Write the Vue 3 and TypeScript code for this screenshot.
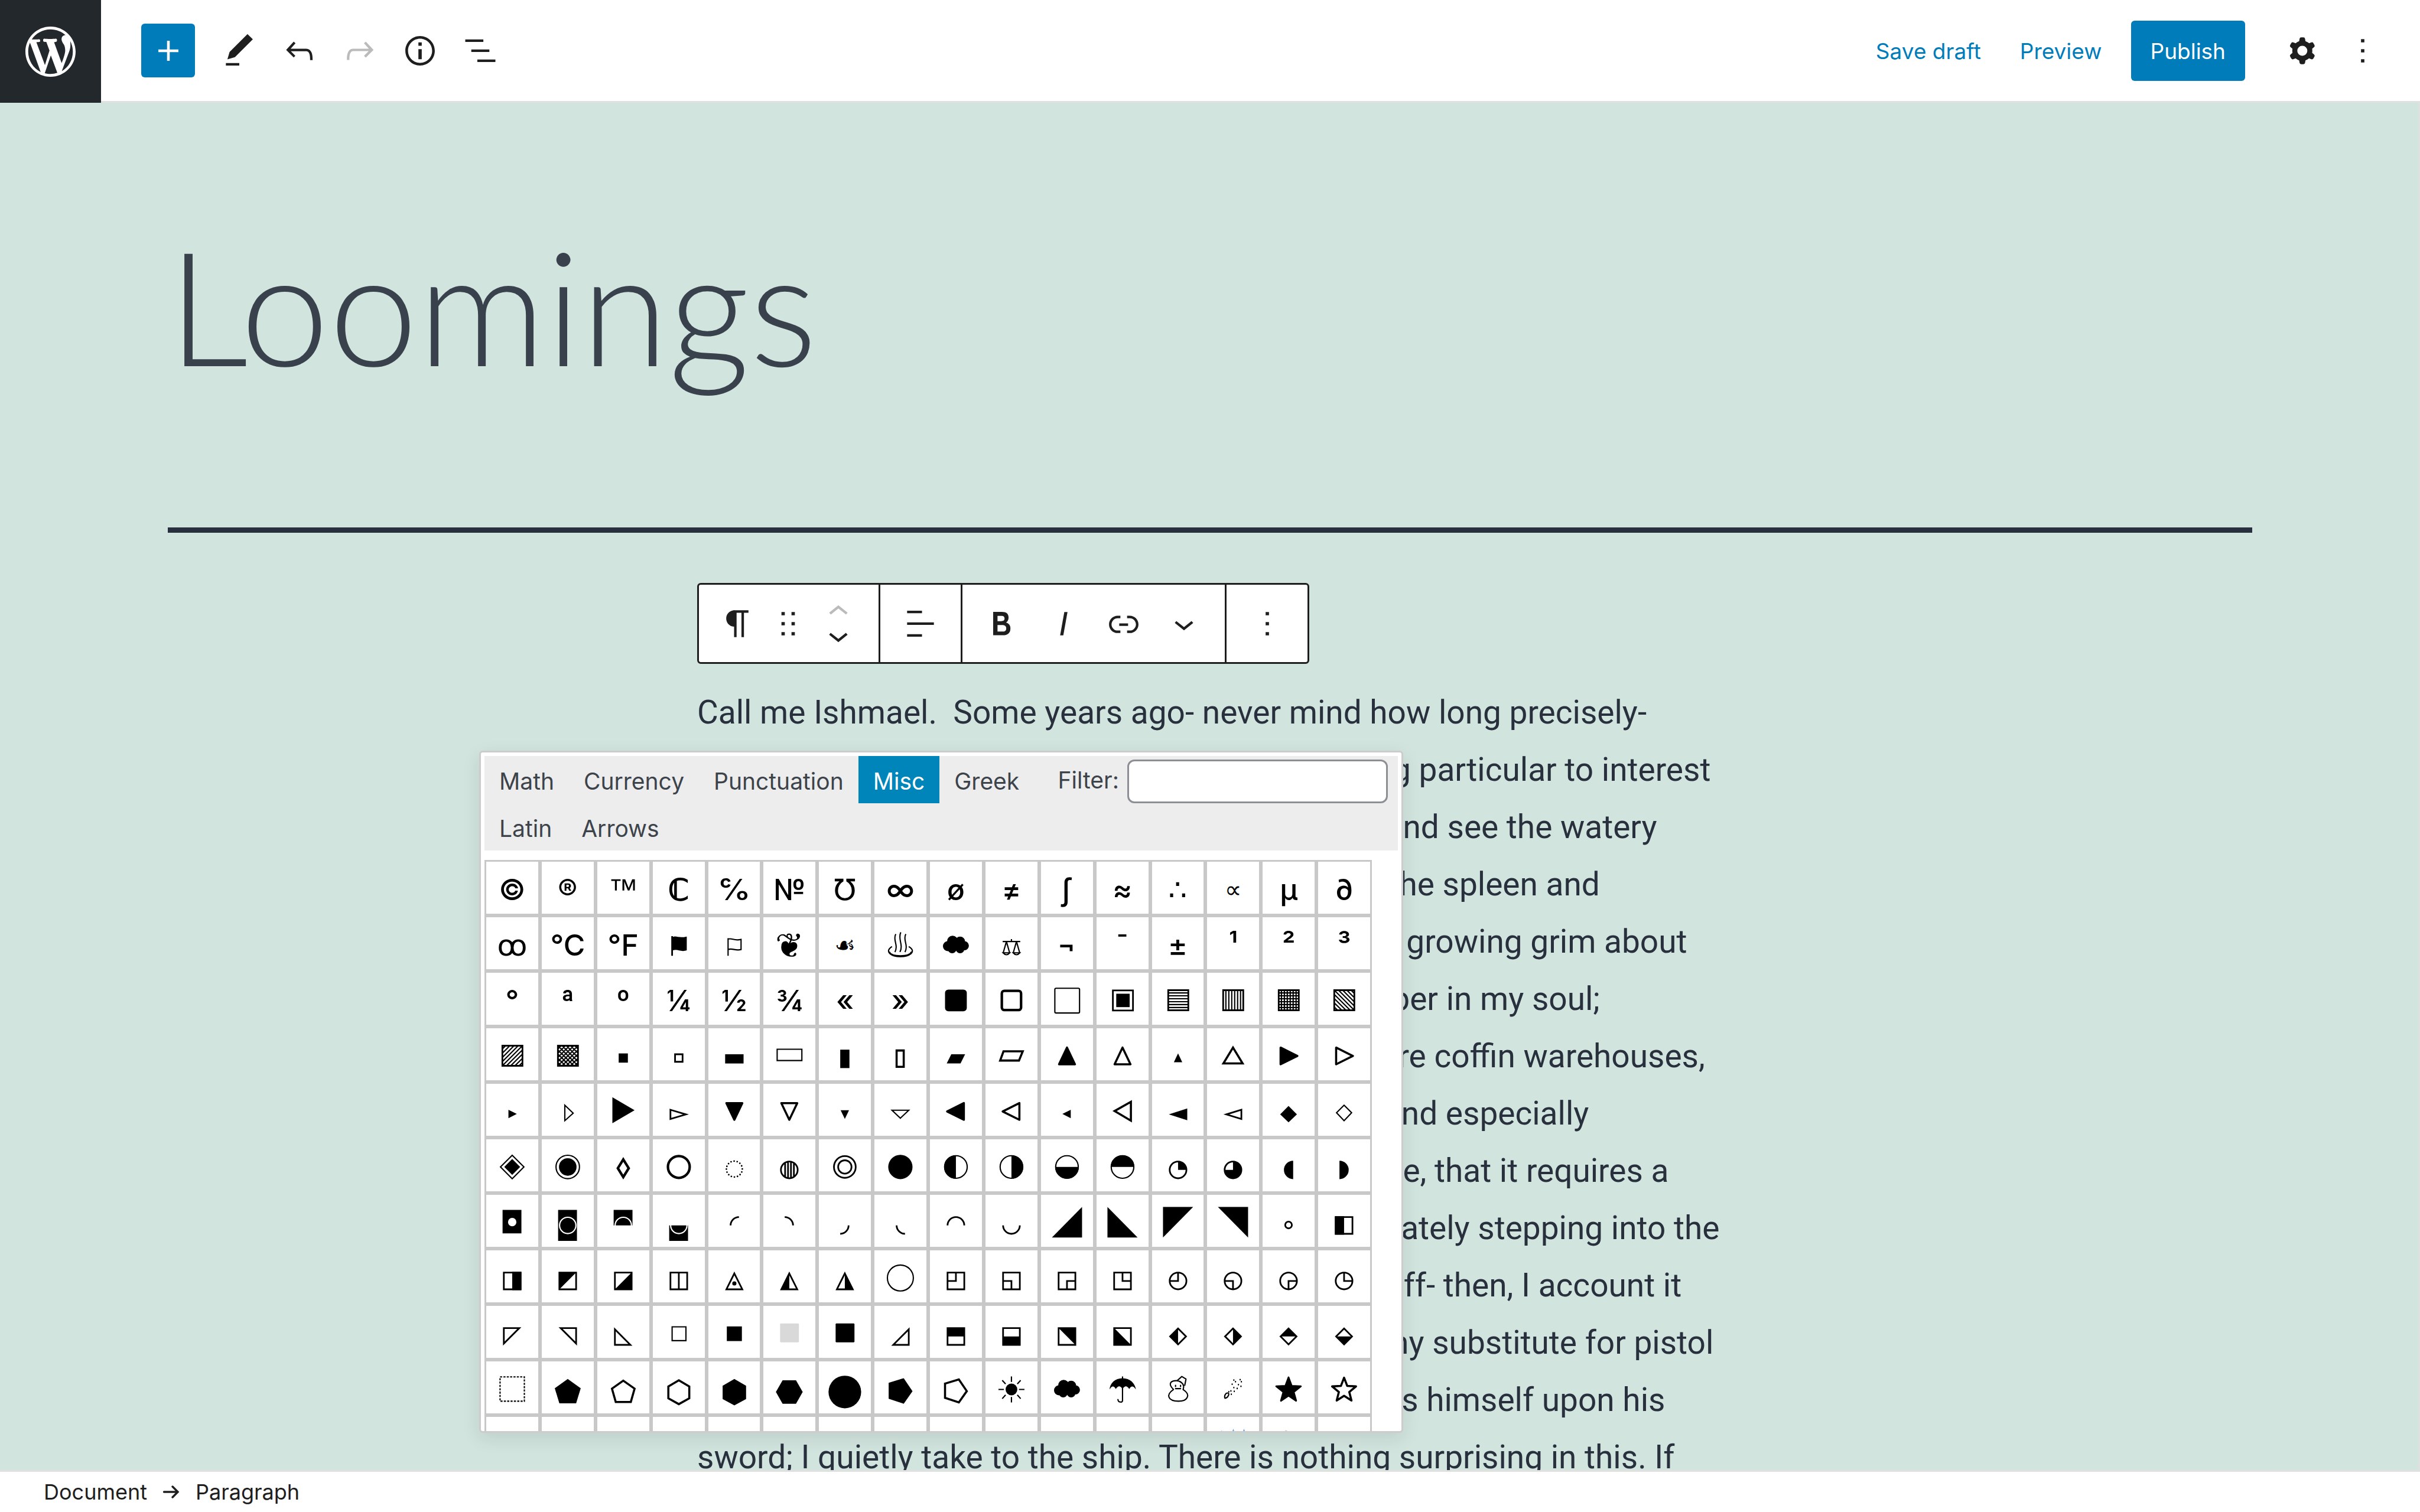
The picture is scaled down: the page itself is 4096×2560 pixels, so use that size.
<script setup lang="ts">
import { ref } from 'vue'

interface Cell {
  ch: string
  /** filled outline */
  f?: string
  /** stroked outline */
  s?: string
  /** stroke width */
  w?: number
  dash?: string
  round?: boolean
  tint?: string
  /** glyph variant for text cells */
  kind?: string
}

const circle = (cx: number, cy: number, r: number): string =>
  `M${cx - r} ${cy}a${r} ${r} 0 1 0 ${2 * r} 0a${r} ${r} 0 1 0 ${-2 * r} 0z`

const rect = (x: number, y: number, w: number, h: number): string => `M${x} ${y}h${w}v${h}h${-w}z`

const rounded = (x: number, y: number, s: number, r: number): string =>
  `M${x + r} ${y}h${s - 2 * r}a${r} ${r} 0 0 1 ${r} ${r}v${s - 2 * r}a${r} ${r} 0 0 1 ${-r} ${r}h${2 * r - s}a${r} ${r} 0 0 1 ${-r} ${-r}v${2 * r - s}a${r} ${r} 0 0 1 ${r} ${-r}z`

const star = (cx: number, cy: number, outer: number, inner: number): string => {
  const pts: string[] = []
  for (let i = 0; i < 10; i++) {
    const r = i % 2 ? inner : outer
    const a = (Math.PI / 5) * i
    pts.push(`${(cx + r * Math.sin(a)).toFixed(1)} ${(cy - r * Math.cos(a)).toFixed(1)}`)
  }
  return `M${pts.join('L')}z`
}

/** Parallel lines inside the hatched squares. */
const X0 = 42
const Y0 = 45
const SIDE = 49
const rows = [1, 2, 3, 4, 5, 6].map((i) => `M${X0} ${Y0 + i * 7}h${SIDE}`).join('')
const cols = [1, 2, 3, 4, 5, 6].map((i) => `M${X0 + i * 7} ${Y0}v${SIDE}`).join('')
const falling = [-40, -30, -20, -10, 0, 10, 20, 30, 40]
  .map((d) => (d < 0 ? `M${X0} ${Y0 - d}l${SIDE + d} ${SIDE + d}` : `M${X0 + d} ${Y0}l${SIDE - d} ${SIDE - d}`))
  .join('')
const rising = [-40, -30, -20, -10, 0, 10, 20, 30, 40]
  .map((d) =>
    d < 0
      ? `M${X0} ${Y0 + SIDE + d}l${SIDE + d} ${-SIDE - d}`
      : `M${X0 + d} ${Y0 + SIDE}l${SIDE - d} ${-SIDE + d}`,
  )
  .join('')
const hatchBox = rect(X0, Y0, SIDE, SIDE) + rect(X0 + 1, Y0 + 1, SIDE - 2, SIDE - 2)

const box = rect(46, 57, 40, 40)
const disc = circle(66, 77, 20)
const big = circle(66, 70, 27)
const small = 'M66 59L85 97H47z'
const lozenge = 'M66 58L85 77L66 96L47 77z'
const cloud =
  circle(58, 61, 13) + circle(76, 62, 12) + circle(47, 73, 12) + circle(86, 72, 11) + circle(57, 80, 10) + circle(76, 80, 10) + circle(66, 71, 13)

const letters = (text: string): Cell[] => text.split(' ').map((ch) => ({ ch }))

const cells: Cell[] = [
  ...letters('© ®'),
  { ch: '™', kind: 'arial' },
  { ch: 'ℂ', kind: 'heavy' },
  ...letters('℅ № ℧ ∞ ø ≠ ∫ ≈ ∴'),
  { ch: '∝', kind: 'little' },
  ...letters('µ ∂'),

  ...letters('ꝏ ℃ ℉'),
  { ch: '⚑', f: 'M48 49h4v2c8-4 14 4 33-1v33c-14 5-22-4-33 0v13h-4z' },
  { ch: '⚐', s: 'M51 96V54M51 56c10-3 14 5 31 1v24c-13 4-20-4-31 0', w: 3 },
  { ch: '❦', kind: 'large' },
  { ch: '☙', kind: 'little' },
  {
    ch: '♨',
    s: 'M55 44c-8 14 7 26-2 43M67 40c-8 16 7 29-2 47M79 44c-8 14 7 26-2 43M46 74c-20 13 0 24 20 24s41-11 20-24M39 86c4 8 14 10 27 10s23-2 27-10',
    w: 3,
  },
  { ch: '☁', f: cloud, kind: 'solid' },
  { ch: '⚖', s: 'M45 62h42M66 56v6M54 62L46 90M54 62l8 28M78 62l-8 28M78 62l8 28M46 89q8 9 16 0zM70 89q8 9 16 0z', w: 3 },
  ...letters('¬ ¯ ± ¹ ² ³'),

  ...letters('° ª º ¼ ½ ¾ « »'),
  { ch: '■', f: rounded(40, 44, 52, 8) },
  { ch: '□', s: rounded(43, 47, 46, 6), w: 6 },
  { ch: '▢', s: rounded(37, 41, 59, 3), w: 3 },
  { ch: '▣', s: rect(43, 46, 48, 48), w: 4, f: rect(51, 54, 32, 32) },
  { ch: '▤', s: hatchBox + rows, w: 3 },
  { ch: '▥', s: hatchBox + cols, w: 3 },
  { ch: '▦', s: hatchBox + rows + cols, w: 3 },
  { ch: '▧', s: hatchBox + falling, w: 3 },

  { ch: '▨', s: hatchBox + rising, w: 3 },
  { ch: '▩', s: hatchBox + rising + falling, w: 3 },
  { ch: '▪', f: rect(55, 64, 22, 22) },
  { ch: '▫', s: rect(57, 66, 18, 18), w: 4 },
  { ch: '▬', f: rect(44, 66, 44, 22) },
  { ch: '▭', s: rect(37, 54, 59, 27), w: 3 },
  { ch: '▮', f: rect(55, 55, 22, 44) },
  { ch: '▯', s: rect(57, 57, 17, 39), w: 5 },
  { ch: '▰', f: 'M55 66H88L77 88H44z' },
  { ch: '▱', s: 'M47 59H93L84 81H39z', w: 5 },
  { ch: '▲', s: 'M66 50L85 90H47z', f: 'M66 50L85 90H47z', w: 5, round: true },
  { ch: '△', s: 'M66 50L85 90H47z', w: 5, round: true },
  { ch: '▴', f: 'M66 64L76 85H56z' },
  { ch: '▵', s: 'M66 50L89 88H43z', w: 5 },
  { ch: '▶', s: 'M47 50L87 70L47 90z', f: 'M47 50L87 70L47 90z', w: 5, round: true },
  { ch: '▷', s: 'M47 50L87 70L47 90z', w: 5, round: true },

  { ch: '▸', f: 'M57 66L77 76L57 86z' },
  { ch: '▹', s: 'M59 55L79 74L59 92z', w: 3 },
  { ch: '►', f: 'M40 36L93 67L40 98z' },
  { ch: '▻', s: 'M46 66L83 77L46 88z', w: 4 },
  { ch: '▼', s: 'M47 50H85L66 90z', f: 'M47 50H85L66 90z', w: 5, round: true },
  { ch: '▽', s: 'M47 50H85L66 90z', w: 5, round: true },
  { ch: '▾', f: 'M56 67H76L66 88z' },
  { ch: '▿', s: 'M46 67H86L66 86z', w: 3 },
  { ch: '◀', s: 'M85 50V90L45 70z', f: 'M85 50V90L45 70z', w: 5, round: true },
  { ch: '◁', s: 'M85 50V90L45 70z', w: 5, round: true },
  { ch: '◂', f: 'M75 66V86L55 76z' },
  { ch: '◃', s: 'M86 47V92L47 69z', w: 5 },
  { ch: '◄', f: 'M88 63V91L44 77z' },
  { ch: '◅', s: 'M86 66V88L50 77z', w: 4 },
  { ch: '◆', f: 'M66 57L86 77L66 96L46 77z' },
  { ch: '◇', s: 'M66 55L84 73L66 92L48 73z', w: 3 },

  { ch: '◈', s: 'M66 42L94 70L66 98L38 70z', f: 'M66 51L85 70L66 89L47 70z', w: 3 },
  { ch: '◉', s: circle(66, 70, 28), f: circle(66, 70, 21), w: 3 },
  { ch: '◊', s: 'M66 52L79 73L66 94L53 73z', w: 6 },
  { ch: '○', s: circle(66, 70, 26), w: 6 },
  { ch: '◌', s: circle(66, 75, 19), w: 4, dash: '0 7.46', round: true },
  { ch: '◍', s: circle(66, 77, 20) + 'M56 59v36M63 57v40M70 57v40M77 59v36', w: 4 },
  { ch: '◎', s: circle(66, 70, 26) + circle(66, 70, 16), w: 4 },
  { ch: '●', f: circle(66, 70, 29) },
  { ch: '◐', s: big, f: 'M66 42a28 28 0 0 0 0 56z', w: 3 },
  { ch: '◑', s: big, f: 'M66 42a28 28 0 0 1 0 56z', w: 3 },
  { ch: '◒', s: big, f: 'M38 70a28 28 0 0 0 56 0z', w: 3 },
  { ch: '◓', s: big, f: 'M38 70a28 28 0 0 1 56 0z', w: 3 },
  { ch: '◔', s: disc, f: 'M66 77V57a20 20 0 0 1 20 20z', w: 4 },
  { ch: '◕', s: disc, f: 'M66 77V57a20 20 0 1 1 -20 20z', w: 4 },
  { ch: '◖', f: 'M77 55a22 22 0 0 0 0 44z' },
  { ch: '◗', f: 'M55 55a22 22 0 0 1 0 44z' },

  { ch: '◘', f: rect(43, 40, 45, 56) + circle(66, 69, 10) },
  { ch: '◙', f: rect(43, 40, 45, 74) + circle(66, 77, 21) + circle(66, 77, 18) },
  { ch: '◚', f: 'M43 77V40H88V77H87A21 21 0 0 0 45 77zM48 77a18 18 0 0 1 36 0z' },
  { ch: '◛', f: 'M43 77V114H88V77H87A21 21 0 0 1 45 77zM48 77a18 18 0 0 0 36 0z' },
  { ch: '◜', s: 'M57 77A20 20 0 0 1 77 57', w: 4 },
  { ch: '◝', s: 'M55 57A20 20 0 0 1 75 77', w: 4 },
  { ch: '◞', s: 'M75 77A20 20 0 0 1 55 97', w: 4 },
  { ch: '◟', s: 'M57 77A20 20 0 0 0 77 97', w: 4 },
  { ch: '◠', s: 'M46 77A20 20 0 0 1 86 77', w: 4 },
  { ch: '◡', s: 'M46 77A20 20 0 0 0 86 77', w: 4 },
  { ch: '◢', f: 'M30 106H102V33z' },
  { ch: '◣', f: 'M30 33V106H102z' },
  { ch: '◤', f: 'M30 33H102L30 106z' },
  { ch: '◥', f: 'M30 33H102V106z' },
  { ch: '◦', s: circle(66, 76, 8), w: 4 },
  { ch: '◧', s: box, f: rect(44, 55, 22, 44), w: 4 },

  { ch: '◨', s: box, f: rect(66, 55, 22, 44), w: 4 },
  { ch: '◩', s: box, f: 'M46 57H86L46 97z', w: 4 },
  { ch: '◪', s: box, f: 'M86 57V97H46z', w: 4 },
  { ch: '◫', s: box + 'M66 57v40', w: 4 },
  { ch: '◬', s: small, f: circle(66, 83, 5), w: 4 },
  { ch: '◭', s: small, f: 'M66 59V97H47z', w: 4 },
  { ch: '◮', s: small, f: 'M66 59V97H85z', w: 4 },
  { ch: '◯', s: circle(66, 70, 31), w: 3 },
  { ch: '◰', s: box + 'M66 57v20h-20', w: 4 },
  { ch: '◱', s: box + 'M46 77h20v20', w: 4 },
  { ch: '◲', s: box + 'M66 97v-20h20', w: 4 },
  { ch: '◳', s: box + 'M66 57v20h20', w: 4 },
  { ch: '◴', s: disc + 'M66 57v20h-20', w: 4 },
  { ch: '◵', s: disc + 'M46 77h20v20', w: 4 },
  { ch: '◶', s: disc + 'M66 97v-20h20', w: 4 },
  { ch: '◷', s: disc + 'M66 57v20h20', w: 4 },

  { ch: '◸', s: 'M46 57H83L46 94z', w: 4 },
  { ch: '◹', s: 'M49 57H86V94z', w: 4 },
  { ch: '◺', s: 'M46 60V97H83z', w: 4 },
  { ch: '◻', s: rect(50, 54, 33, 33), w: 3 },
  { ch: '◼', f: rect(48, 53, 36, 35) },
  { ch: '◽', f: rounded(44, 46, 45, 2), tint: '#d9d9d9' },
  { ch: '◾', f: rounded(44, 46, 45, 2) },
  { ch: '◿', s: 'M86 60V97H49z', w: 4 },
  { ch: '⬒', s: box, f: rect(46, 57, 40, 20), w: 4 },
  { ch: '⬓', s: box, f: rect(46, 77, 40, 20), w: 4 },
  { ch: '⬔', s: box, f: 'M46 57H86V97z', w: 4 },
  { ch: '⬕', s: box, f: 'M46 57V97H86z', w: 4 },
  { ch: '⬖', s: lozenge, f: 'M66 58V96L47 77z', w: 4 },
  { ch: '⬗', s: lozenge, f: 'M66 58V96L85 77z', w: 4 },
  { ch: '⬘', s: lozenge, f: 'M47 77H85L66 58z', w: 4 },
  { ch: '⬙', s: lozenge, f: 'M47 77H85L66 96z', w: 4 },

  { ch: '⬚', s: rect(37, 41, 58, 58), w: 3, dash: '5 3' },
  { ch: '⬟', f: 'M66 46L97 68L86 104H46L35 68z' },
  { ch: '⬠', s: 'M66 50L93 69L84 101H48L39 69z', w: 5 },
  { ch: '⬡', s: 'M66 49L91 64V92L66 106L41 92V64z', w: 5 },
  { ch: '⬢', f: 'M66 46L94 62V94L66 109L38 94V62z' },
  { ch: '⬣', f: 'M50 49H82L98 77L82 105H50L34 77z' },
  { ch: '⬤', f: circle(66, 77, 39) },
  { ch: '⭓', f: 'M38 55L74 44L95 75L74 105L38 93z' },
  { ch: '⭔', s: 'M40 57L73 47L92 75L73 102L40 91z', w: 5 },
  {
    ch: '☀',
    f: circle(66, 71, 14),
    s: 'M66 40v13M66 89v13M35 71h13M84 71h13M44 49l8 9M80 84l8 9M88 49l-8 9M52 84l-8 9',
    w: 3,
  },
  { ch: '☁', f: cloud, kind: 'solid' },
  {
    ch: '☂',
    f: 'M66 44C48 44 36 56 35 71Q43 57 50 70Q58 57 66 70Q74 57 82 70Q89 57 98 71C96 56 84 44 66 44z',
    s: 'M66 40v57q0 5-5 4q-6 0-6-7',
    w: 3,
  },
  {
    ch: '☃',
    s: 'M55 71C40 56 50 50 62 50C68 50 84 56 78 71C98 84 88 99 67 99C42 99 36 84 55 71M64 50L75 40L85 46L82 61M60 61v3M72 61v3M60 69h12',
    w: 3,
    round: true,
  },
  {
    ch: '☄',
    s: 'M47 92q-3-6 3-12q5-2 6 2q-1 8-9 10zM61 74v1M68 66v1M62 82v1M69 75v1M76 68v1M64 58v1M72 52v1M79 59v1M86 52v1M85 63v1M68 48v1M83 47v1M56 76v1',
    w: 3,
    round: true,
  },
  { ch: '★', f: star(66, 73, 31, 13), s: star(66, 73, 31, 13), w: 4, round: true },
  { ch: '☆', s: star(66, 73, 30, 13), w: 5, round: true },

  ...'☎☏☐☑☒☓☔☕☖☗☘☙☚'.split('').map((ch) => ({ ch, f: 'M0 0' })),
  { ch: '⛆', f: 'M36 42L39 36L41 42zM63 42L67 32L70 42zM89 42L92 32L96 42z', tint: '#5aa5e6' },
  { ch: '☃', f: 'M58 36h4l2 6h-6z', tint: '#c9c9c9' },
  { ch: '☇', f: 'M0 0' },
]

const filter = ref('')
const tabRows = [['Math', 'Currency', 'Punctuation', 'Misc', 'Greek'], ['Latin', 'Arrows']]
const active = ref('Misc')

const tools = [
  { name: 'Edit', d: 'M20.1 5.1L16.9 2 6.2 12.7l-1.3 4.4 4.5-1.3L20.1 5.1zM4 20.8h8v-1.5H4v1.5z' },
  {
    name: 'Undo',
    d: 'M18.3 11.7c-.6-.6-1.4-.9-2.3-.9H6.7l2.9-3.3-1.1-1-4.5 5L8.5 16l1-1-2.7-2.7H16c.5 0 .9.2 1.3.5 1 1 1 3.4 1 4.5v.3h1.5v-.2c0-1.5 0-4.3-1.5-5.7z',
  },
  {
    name: 'Redo',
    off: true,
    d: 'M15.6 6.5l-1.1 1 2.9 3.3H8c-.9 0-1.7.3-2.3.9-1.4 1.5-1.4 4.2-1.4 5.6v.2h1.5v-.3c0-1.1 0-3.5 1-4.5.3-.3.7-.5 1.3-.5h9.2L14.5 15l1.1 1.1 4.6-4.6-4.6-5z',
  },
  {
    name: 'Details',
    d: 'M12 3.2c-4.8 0-8.8 3.9-8.8 8.8 0 4.8 3.9 8.8 8.8 8.8 4.8 0 8.8-3.9 8.8-8.8 0-4.8-4-8.8-8.8-8.8zm0 16c-4 0-7.2-3.3-7.2-7.2C4.8 8 8 4.8 12 4.8s7.2 3.3 7.2 7.2c0 4-3.2 7.2-7.2 7.2zM11 17h2v-6h-2v6zm0-8h2V7h-2v2z',
  },
  { name: 'List view', d: 'M13.8 5.2H3v1.5h10.8V5.2zm-3.6 12v1.5H21v-1.5H10.2zm7.2-6H6.6v1.5h10.8v-1.5z' },
]

const dots = 'M13 19h-2v-2h2v2zm0-6h-2v-2h2v2zm0-6h-2V5h2v2z'
const chevronDown = 'M17.5 11.6L12 16l-5.5-4.4.9-1.2L12 14l4.5-3.6 1 1.2z'
const chevronUp = 'M6.5 12.4L12 8l5.5 4.4-.9 1.2L12 10l-4.5 3.6-1-1.2z'

const formats = [
  {
    name: 'Bold',
    view: '1 0 24 24',
    d: 'M14.7 11.3c1-.6 1.5-1.6 1.5-3 0-2.3-1.3-3.4-4-3.4H7v14h5.8c1.4 0 2.5-.3 3.3-1 .8-.7 1.2-1.7 1.2-2.9.1-1.9-.8-3.1-2.6-3.7zm-5.1-4h2.3c.6 0 1.1.1 1.4.4.3.3.5.7.5 1.2s-.2 1-.5 1.2c-.3.3-.8.4-1.4.4H9.6V7.3zm4.6 9c-.4.3-1 .4-1.7.4H9.6v-3.9h2.9c.7 0 1.3.2 1.7.5.4.3.6.8.6 1.5s-.2 1.2-.6 1.5z',
  },
  { name: 'Italic', view: '0 0 24 24', d: 'M12.5 5L10 19h1.9l2.5-14z' },
  {
    name: 'Link',
    view: '0 0 24 24',
    d: 'M15.6 7.2H14v1.5h1.6c2 0 3.7 1.7 3.7 3.7s-1.7 3.7-3.7 3.7H14v1.5h1.6c2.8 0 5.2-2.3 5.2-5.2 0-2.9-2.3-5.2-5.2-5.2zM4.7 12.4c0-2 1.7-3.7 3.7-3.7H10V7.2H8.4c-2.9 0-5.2 2.3-5.2 5.2 0 2.9 2.3 5.2 5.2 5.2H10v-1.5H8.4c-2 0-3.7-1.7-3.7-3.7zm4.6.9h5.3v-1.5H9.3v1.5z',
  },
  { name: 'More formatting', view: '0 0 24 24', d: chevronDown },
]

const lines = [
  'Call me Ishmael. \u00a0Some years ago- never mind how long precisely-',
  'having little or no money in my purse, and nothing particular to interest',
  'me on shore, I thought I would sail about a little and see the watery',
  'part of the world. It is a way I have of driving off the spleen and',
  'regulating the circulation. Whenever I find myself growing grim about',
  'the mouth; whenever it is a damp, drizzly November in my soul;',
  'whenever I find myself involuntarily pausing before coffin warehouses,',
  'and bringing up the rear of every funeral I meet; and especially',
  'whenever my hypos get such an upper hand of me, that it requires a',
  'strong moral principle to prevent me from deliberately stepping into the',
  'street, and methodically knocking people’s hats off- then, I account it',
  'high time to get to sea as soon as I can. This is my substitute for pistol',
  'and ball. With a philosophical flourish Cato throws himself upon his',
  'sword; I quietly take to the ship. There is nothing surprising in this. If',
]
</script>

<template>
  <div class="editor">
    <header class="header">
      <a class="logo" href="#" aria-label="View posts">
        <svg viewBox="0 0 20 20" aria-hidden="true">
          <path
            d="M20 10c0-5.51-4.49-10-10-10C4.48 0 0 4.49 0 10c0 5.52 4.48 10 10 10 5.51 0 10-4.48 10-10zM7.78 15.37L4.37 6.22c.55-.02 1.17-.08 1.17-.08.5-.06.44-1.13-.06-1.11 0 0-1.45.11-2.37.11-.18 0-.37 0-.58-.01C4.12 2.69 6.87 1.11 10 1.11c2.33 0 4.45.87 6.05 2.34-.68-.11-1.65.39-1.65 1.58 0 .74.45 1.36.9 2.1.35.61.55 1.36.55 2.46 0 1.49-1.4 5-1.4 5l-3.03-8.37c.54-.02.82-.17.82-.17.5-.05.44-1.25-.06-1.22 0 0-1.44.12-2.38.12-.87 0-2.33-.12-2.33-.12-.5-.03-.56 1.2-.06 1.22l.92.08 1.26 3.41zM17.41 10c.24-.64.74-1.87.43-4.25.7 1.29 1.05 2.71 1.05 4.25 0 3.29-1.73 6.24-4.4 7.78.97-2.59 1.94-5.2 2.92-7.78zM6.1 18.09C3.12 16.65 1.11 13.53 1.11 10c0-1.3.23-2.48.72-3.59C3.25 10.3 4.67 14.2 6.1 18.09zm4.03-6.63l2.58 6.98c-.86.29-1.76.45-2.71.45-.79 0-1.57-.11-2.29-.33.81-2.38 1.62-4.74 2.42-7.1z"
          />
        </svg>
      </a>
      <div class="bar">
        <div class="tools">
          <button type="button" class="inserter" aria-label="Add block">
            <svg class="icon" viewBox="0 0 24 24"><path d="M18 11.2h-5.2V6h-1.6v5.2H6v1.6h5.2V18h1.6v-5.2H18z" /></svg>
          </button>
          <button
            v-for="t in tools"
            :key="t.name"
            type="button"
            class="tool"
            :class="{ off: t.off }"
            :disabled="t.off"
            :aria-label="t.name"
          >
            <svg class="icon" viewBox="0 0 24 24"><path :d="t.d" /></svg>
          </button>
        </div>
        <div class="settings">
          <button type="button" class="text-button">Save draft</button>
          <button type="button" class="text-button">Preview</button>
          <button type="button" class="publish">Publish</button>
          <button type="button" class="tool" aria-label="Settings">
            <svg class="icon" viewBox="0 0 24 24">
              <path
                fill-rule="evenodd"
                d="M10.289 4.836A1 1 0 0111.275 4h1.306a1 1 0 01.987.836l.244 1.466c.787.26 1.503.679 2.108 1.218l1.393-.522a1 1 0 011.216.437l.653 1.13a1 1 0 01-.23 1.273l-1.148.944a6.025 6.025 0 010 2.435l1.149.946a1 1 0 01.23 1.272l-.653 1.13a1 1 0 01-1.216.437l-1.394-.522c-.605.54-1.32.958-2.108 1.218l-.244 1.466a1 1 0 01-.987.836h-1.306a1 1 0 01-.986-.836l-.244-1.466a5.995 5.995 0 01-2.108-1.218l-1.394.522a1 1 0 01-1.217-.436l-.653-1.131a1 1 0 01.23-1.272l1.149-.946a6.026 6.026 0 010-2.435l-1.148-.944a1 1 0 01-.23-1.272l.653-1.131a1 1 0 011.217-.437l1.393.522a5.994 5.994 0 012.108-1.218l.244-1.466zM14.929 12a3 3 0 11-6 0 3 3 0 016 0z"
              />
            </svg>
          </button>
          <button type="button" class="tool" aria-label="Options">
            <svg class="icon" viewBox="0 0 24 24"><path :d="dots" /></svg>
          </button>
        </div>
      </div>
    </header>

    <main class="canvas">
      <div class="title-block"><h1 class="title">Loomings</h1></div>
      <div class="column">
        <div class="block-toolbar" role="toolbar" aria-label="Block tools">
          <div class="group lead">
            <button type="button" class="lead-button" aria-label="Paragraph">
              <svg class="icon" viewBox="0 0 24 24">
                <path d="M18.3 4H9.9v-.1l-.9.2c-2.3.4-4 2.4-4 4.8s1.7 4.4 4 4.8l.7.1V20h1.5V5.5h2.9V20h1.5V5.5h2.7V4z" />
              </svg>
            </button>
            <button type="button" class="lead-button" aria-label="Drag">
              <svg class="icon" viewBox="0 0 24 24">
                <path d="M8 7h2V5H8v2zm0 6h2v-2H8v2zm0 6h2v-2H8v2zm6-14v2h2V5h-2zm0 8h2v-2h-2v2zm0 6h2v-2h-2v2z" />
              </svg>
            </button>
            <div class="movers">
              <button type="button" class="mover off" disabled aria-label="Move up">
                <svg viewBox="0 5 24 14"><path :d="chevronUp" /></svg>
              </button>
              <button type="button" class="mover" aria-label="Move down">
                <svg viewBox="0 5 24 14"><path :d="chevronDown" /></svg>
              </button>
            </div>
          </div>
          <div class="group align">
            <button type="button" class="tool" aria-label="Align text">
              <svg class="icon" viewBox="0 0 24 24">
                <path d="M4 19.8h8.9v-1.5H4v1.5zm8.9-15.6H4v1.5h8.9V4.2zm-8.9 7v1.5h16v-1.5H4z" />
              </svg>
            </button>
          </div>
          <div class="group format">
            <button v-for="f in formats" :key="f.name" type="button" class="tool" :aria-label="f.name">
              <svg class="icon" :viewBox="f.view"><path :d="f.d" /></svg>
            </button>
          </div>
          <div class="group last">
            <button type="button" class="tool" aria-label="Block options">
              <svg class="icon" viewBox="0 0 24 24"><path :d="dots" /></svg>
            </button>
          </div>
        </div>
        <p class="paragraph"><span v-for="(line, i) in lines" :key="i" class="line">{{ line }}</span></p>
      </div>

      <section class="charmap" aria-label="Special characters">
        <div class="tabs">
          <div v-for="(row, i) in tabRows" :key="i" class="tab-row">
            <button
              v-for="tab in row"
              :key="tab"
              type="button"
              class="tab"
              :class="{ active: tab === active }"
              @click="active = tab"
            >{{ tab }}</button>
            <template v-if="i === 0">
              <label class="filter-label" for="charmap-filter">Filter:</label>
              <input id="charmap-filter" v-model="filter" class="filter" type="text" />
            </template>
          </div>
        </div>
        <div class="cells">
          <button v-for="(c, i) in cells" :key="i" type="button" class="cell" :class="c.kind" :aria-label="c.ch">
            <svg v-if="c.f || c.s" class="shape" viewBox="4 4 124 124" aria-hidden="true">
              <path v-if="c.f" :d="c.f" :fill="c.tint || '#000'" :fill-rule="c.kind === 'solid' ? 'nonzero' : 'evenodd'" />
              <path
                v-if="c.s"
                :d="c.s"
                fill="none"
                stroke="#000"
                :stroke-width="c.w"
                :stroke-dasharray="c.dash"
                :stroke-linejoin="c.round ? 'round' : 'miter'"
                :stroke-linecap="c.round ? 'round' : 'butt'"
              />
            </svg>
            <template v-else>{{ c.ch }}</template>
          </button>
        </div>
      </section>
    </main>

    <footer class="footer">
      <a class="crumb" href="#">Document</a>
      <svg class="arrow" viewBox="0 0 40 32" aria-hidden="true"><path d="M2 16H36M23 3L36 16L23 29" /></svg>
      <a class="crumb" href="#">Paragraph</a>
    </footer>
  </div>
</template>

<style>
body {
  margin: 0;
  background: #d1e4dd;
}
</style>

<style scoped>
.editor {
  display: flex;
  flex-direction: column;
  height: 100vh;
  overflow: hidden;
  font-family: Inter, 'DejaVu Sans', sans-serif;
  color: #1e1e1e;
}

button {
  margin: 0;
  padding: 0;
  border: 0;
  background: none;
  font: inherit;
  color: inherit;
  cursor: pointer;
}

svg {
  display: block;
  fill: currentColor;
}

.icon {
  width: 68px;
  height: 68px;
}

.header {
  display: flex;
  height: 174px;
  flex: none;
  background: #fff;
}

.logo {
  display: flex;
  width: 171px;
  align-items: center;
  justify-content: center;
  background: #23282d;
  color: #fff;
}

.logo svg {
  width: 85px;
  height: 85px;
}

.bar {
  display: flex;
  flex: 1;
  align-items: center;
  justify-content: space-between;
  padding: 0 46px 0 68px;
  border-bottom: 3px solid #e0e0e0;
}

.tools,
.settings {
  display: flex;
  align-items: center;
}

.inserter {
  display: flex;
  width: 91px;
  height: 91px;
  align-items: center;
  justify-content: center;
  margin-right: 24px;
  border-radius: 6px;
  background: #007cba;
  color: #fff;
}

.tool {
  display: flex;
  width: 102px;
  height: 102px;
  align-items: center;
  justify-content: center;
}

.off {
  color: #bbb;
}

.text-button,
.publish {
  height: 102px;
  padding: 2px 33px 0;
  font-size: 37px;
  line-height: 48px;
  color: #007cba;
}

.publish {
  margin: 0 46px 0 16px;
  border-radius: 6px;
  background: #007cba;
  color: #fff;
}

.canvas {
  position: relative;
  flex: 1;
  min-height: 0;
  overflow: hidden;
  border-right: 3px solid #e0e0e0;
  background: #d1e4dd;
}

.title-block {
  margin: 0 281px 85px 284px;
  padding: 181px 0 217px;
  border-bottom: 9px solid #28303d;
}

.title {
  margin: 0;
  font-family: Lato, sans-serif;
  font-size: 269px;
  font-weight: 300;
  line-height: 321px;
  color: #39414d;
}

.column {
  width: 1733px;
  margin: 0 auto;
}

.block-toolbar {
  display: flex;
  width: max-content;
  height: 131px;
  border: 3px solid #1e1e1e;
  border-radius: 6px;
  background: #fff;
}

.group {
  display: flex;
  align-items: center;
  justify-content: center;
  box-sizing: border-box;
  border-right: 3px solid #1e1e1e;
}

.lead {
  width: 307px;
  justify-content: flex-start;
  padding-left: 23px;
}

.lead-button,
.movers {
  display: flex;
  width: 85px;
  flex-direction: column;
  align-items: center;
}

.mover svg {
  width: 68px;
  height: 40px;
}

.align {
  width: 139px;
}

.format {
  width: 447px;
}

.last {
  width: 137px;
  border-right: 0;
}

.paragraph {
  margin: 34px 0 0;
  font-family: Roboto, sans-serif;
  font-size: 55px;
  line-height: 97px;
  color: #28303d;
}

.line {
  display: block;
  white-space: nowrap;
}

.charmap {
  position: absolute;
  top: 1097px;
  left: 811px;
  box-sizing: border-box;
  width: 1564px;
  height: 1155px;
  padding: 6px 6px 0;
  overflow: hidden;
  border: 3px solid #ccc;
  border-radius: 6px;
  background: #fff;
  box-shadow: 0 9px 30px rgba(25, 30, 35, 0.1);
}

.tabs {
  background: #ededed;
  font-size: 39px;
  color: #3c434a;
}

.tab-row {
  display: flex;
  height: 80px;
  align-items: center;
}

.tab {
  height: 80px;
  padding: 4px 25px 0;
}

.tab.active {
  background: #0085ba;
  color: #fff;
}

.filter-label {
  margin-left: auto;
}

.filter {
  box-sizing: border-box;
  width: 441px;
  height: 74px;
  margin: 6px 17px 0 14px;
  padding: 0 20px;
  border: 3px solid #8c8f94;
  border-radius: 12px;
  background: #fff;
  font: inherit;
}

.cells {
  display: grid;
  width: 1502px;
  grid-template-columns: repeat(16, minmax(0, 1fr));
  margin-top: 16px;
}

.cell {
  box-sizing: border-box;
  height: 94px;
  padding-top: 6px;
  border: 3px solid #c8c8c8;
  background: #fff;
  font-size: 50px;
  font-weight: 500;
  line-height: 82px;
  color: #000;
}

.cell:has(svg) {
  padding: 0;
}

.arial {
  font-family: 'Liberation Sans', sans-serif;
}

.heavy {
  -webkit-text-stroke: 2px #000;
}

.little {
  font-size: 40px;
}

.large {
  font-size: 58px;
}

.shape {
  width: 100%;
  height: 88px;
}

.footer {
  display: flex;
  height: 68px;
  flex: none;
  align-items: center;
  padding-left: 74px;
  border-top: 3px solid #e0e0e0;
  background: #fff;
}

.crumb {
  font-size: 36px;
  line-height: 48px;
  color: #1e1e1e;
  text-decoration: none;
}

.arrow {
  width: 28px;
  height: 22px;
  margin: 0 27px;
  fill: none;
  stroke: #1e1e1e;
  stroke-width: 5;
  stroke-linecap: round;
}
</style>
